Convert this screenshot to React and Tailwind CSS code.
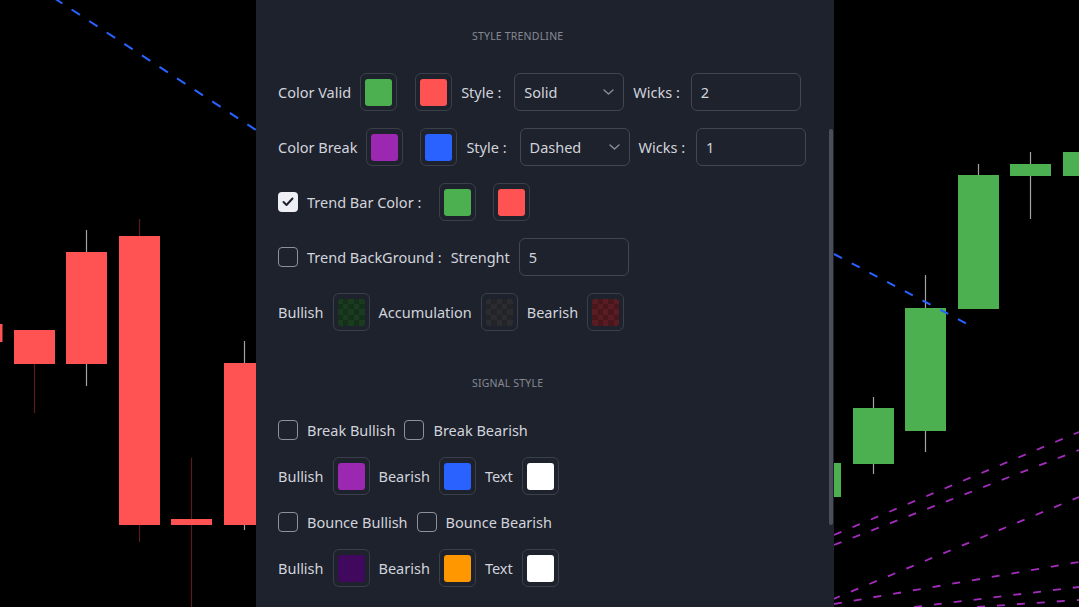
import React from 'react';

const font = "font-['Noto_Sans','Liberation_Sans',sans-serif]";

function Label({ children, className = '' }) {
  return <span className={`text-[14.5px] text-[#d1d4dc] whitespace-pre leading-none ${className}`}>{children}</span>;
}

function Swatch({ color, pattern, className = '' }) {
  return (
    <div className={`w-[37px] h-[38px] shrink-0 rounded-[6px] border border-[#3b3f4a] flex items-center justify-center ${className}`}>
      {pattern ? (
        <div className="w-[27px] h-[27px] rounded-[3px] grid grid-cols-5 grid-rows-5 overflow-hidden">
          {Array.from({ length: 25 }).map((_, i) => (
            <div key={i} style={{ background: i % 2 === 0 ? pattern[0] : pattern[1] }} />
          ))}
        </div>
      ) : (
        <div className="w-[27px] h-[27px] rounded-[3px]" style={{ background: color }} />
      )}
    </div>
  );
}

function Checkbox({ checked }) {
  if (checked) {
    return (
      <div className="w-[20px] h-[20px] shrink-0 rounded-[4px] bg-[#eef0f5] flex items-center justify-center">
        <svg width="12" height="10" viewBox="0 0 12 10" fill="none">
          <path d="M1.5 5l3 3 6-6.5" stroke="#1e222d" strokeWidth="2" strokeLinecap="round" strokeLinejoin="round" />
        </svg>
      </div>
    );
  }
  return <div className="w-[20px] h-[20px] shrink-0 rounded-[4px] border-[1.5px] border-[#8e919b]" />;
}

function Select({ value }) {
  return (
    <div className="w-[110px] h-[38px] shrink-0 ml-[4px] rounded-[6px] border border-[#434651] flex items-center justify-between pl-[9px] pr-[9px]">
      <Label>{value}</Label>
      <svg width="11" height="6" viewBox="0 0 11 6" fill="none">
        <path d="M1 1l4.5 4 4.5-4" stroke="#8a8e98" strokeWidth="1.4" strokeLinecap="round" strokeLinejoin="round" />
      </svg>
    </div>
  );
}

function Input({ value, className = '' }) {
  return (
    <div className={`w-[110px] h-[38px] shrink-0 rounded-[6px] border border-[#434651] flex items-center pl-[9px] ${className}`}>
      <Label>{value}</Label>
    </div>
  );
}

function Row({ children }) {
  return <div className="h-[38px] flex items-center gap-[9px]">{children}</div>;
}

function Title({ children }) {
  return (
    <div className="h-[20px] flex items-center pl-[194px] text-[10.5px] tracking-[0.2px] text-[#868993] uppercase">
      {children}
    </div>
  );
}

const red = '#ff5252';
const green = '#4caf50';
const wickGray = '#a3a3a3';
const wickRed = '#5e1b1f';

function LeftChart() {
  const candles = [
    { x: -2, w: 4.5, top: 324, bot: 342, wt: 324, wb: 342, wc: wickRed },
    { x: 14, w: 41, top: 330, bot: 364, wt: 330, wb: 413, wc: wickRed },
    { x: 66, w: 41, top: 252, bot: 364, wt: 230, wb: 386, wc: wickGray },
    { x: 119, w: 41, top: 236, bot: 525, wt: 219, wb: 542, wc: wickRed },
    { x: 171, w: 41, top: 519, bot: 525, wt: 458, wb: 607, wc: wickRed },
    { x: 224, w: 41, top: 363, bot: 525, wt: 341, wb: 530, wc: wickGray },
  ];
  return (
    <svg width="256" height="607" className="shrink-0 block">
      {candles.map((c, i) => (
        <g key={i}>
          <line x1={c.x + c.w / 2} x2={c.x + c.w / 2} y1={c.wt} y2={c.wb} stroke={c.wc} strokeWidth="1.2" />
          <rect x={c.x} y={c.top} width={c.w} height={c.bot - c.top} fill={red} />
        </g>
      ))}
      <line x1="54" y1="-2" x2="256" y2="130" stroke="#2962ff" strokeWidth="2" strokeDasharray="10 11" />
    </svg>
  );
}

function RightChart() {
  const candles = [
    { x: -10, w: 17, top: 463, bot: 497, wt: 463, wb: 497 },
    { x: 19, w: 41, top: 408, bot: 464, wt: 397, wb: 474 },
    { x: 71, w: 41, top: 308, bot: 431, wt: 275, wb: 452 },
    { x: 124, w: 41, top: 175, bot: 309, wt: 164, wb: 309 },
    { x: 176, w: 41, top: 164, bot: 176, wt: 152, wb: 219 },
    { x: 229, w: 41, top: 152, bot: 176, wt: 152, wb: 176 },
  ];
  const purple = [
    [0, 535, 245, 432],
    [0, 545, 245, 450],
    [-20, 607, 245, 497],
    [0, 604, 245, 562],
    [80, 607, 245, 587],
    [143, 607, 245, 600],
  ];
  return (
    <svg width="245" height="607" className="shrink-0 block">
      {candles.map((c, i) => (
        <g key={i}>
          <line x1={c.x + c.w / 2} x2={c.x + c.w / 2} y1={c.wt} y2={c.wb} stroke={wickGray} strokeWidth="1.2" />
          <rect x={c.x} y={c.top} width={c.w} height={c.bot - c.top} fill={green} />
        </g>
      ))}
      <line x1="0" y1="254" x2="139" y2="327" stroke="#2962ff" strokeWidth="2" strokeDasharray="9 11" />
      {purple.map((p, i) => (
        <line key={i} x1={p[0]} y1={p[1]} x2={p[2]} y2={p[3]} stroke="#a62cbf" strokeWidth="1.8" strokeDasharray="8 12" />
      ))}
    </svg>
  );
}

export default function App() {
  return (
    <div className={`w-[1079px] h-[607px] bg-black flex overflow-hidden ${font}`}>
      <LeftChart />
      <div className="w-[578px] h-[607px] shrink-0 bg-[#1e222d] flex">
        <div className="flex-1 pl-[22px] pt-[27px] flex flex-col">
          <Title>Style Trendline</Title>
          <div className="mt-[26px] flex flex-col gap-[17px]">
            <Row>
              <Label>Color Valid</Label>
              <Swatch color={green} />
              <Swatch color={red} className="ml-[9px]" />
              <Label>Style :</Label>
              <Select value="Solid" />
              <Label>Wicks :</Label>
              <Input value="2" className="ml-[2px]" />
            </Row>
            <Row>
              <Label>Color Break</Label>
              <Swatch color="#9c27b0" />
              <Swatch color="#2962ff" className="ml-[8px]" />
              <Label>Style :</Label>
              <Select value="Dashed" />
              <Label>Wicks :</Label>
              <Input value="1" className="ml-[2px]" />
            </Row>
            <Row>
              <Checkbox checked />
              <Label>Trend Bar Color :</Label>
              <Swatch color={green} className="ml-[9px]" />
              <Swatch color={red} className="ml-[8px]" />
            </Row>
            <Row>
              <Checkbox />
              <Label>Trend BackGround :</Label>
              <Label>Strenght</Label>
              <Input value="5" />
            </Row>
            <Row>
              <Label>Bullish</Label>
              <Swatch pattern={['#1b3b1e', '#15301a']} />
              <Label>Accumulation</Label>
              <Swatch pattern={['#2b2c30', '#232428']} />
              <Label>Bearish</Label>
              <Swatch pattern={['#581c22', '#47171c']} />
            </Row>
          </div>
          <div className="mt-[43px]">
            <Title>Signal Style</Title>
          </div>
          <div className="mt-[17px] flex flex-col gap-[8px]">
            <Row>
              <Checkbox />
              <Label>Break Bullish</Label>
              <Checkbox />
              <Label>Break Bearish</Label>
            </Row>
            <Row>
              <Label>Bullish</Label>
              <Swatch color="#9c27b0" />
              <Label>Bearish</Label>
              <Swatch color="#2962ff" />
              <Label>Text</Label>
              <Swatch color="#ffffff" />
            </Row>
            <Row>
              <Checkbox />
              <Label>Bounce Bullish</Label>
              <Checkbox />
              <Label>Bounce Bearish</Label>
            </Row>
            <Row>
              <Label>Bullish</Label>
              <Swatch color="#40095e" />
              <Label>Bearish</Label>
              <Swatch color="#ff9800" />
              <Label>Text</Label>
              <Swatch color="#ffffff" />
            </Row>
          </div>
        </div>
        <div className="w-[5px] shrink-0 pt-[129px]">
          <div className="w-[4px] h-[396px] rounded-full bg-[#4a4e59]" />
        </div>
      </div>
      <RightChart />
    </div>
  );
}
